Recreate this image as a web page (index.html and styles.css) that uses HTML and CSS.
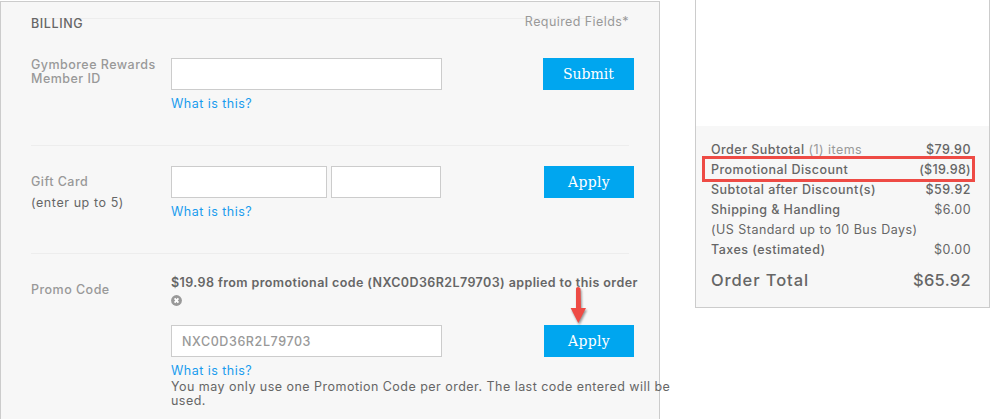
FILE: index.html
```html
<!DOCTYPE html>
<html lang="en">
<head>
    <meta charset="UTF-8">
    <meta name="viewport" content="width=device-width, initial-scale=1.0">
    <title>Checkout - Billing</title>
    <link rel="stylesheet" href="styles.css">
</head>
<body>
<div class="page">
    <main class="billing">
        <div class="billing-head">
            <h2>BILLING</h2>
            <span class="required">Required Fields*</span>
        </div>

        <section class="row rewards">
            <label for="rewards" class="label">Gymboree Rewards<br>Member ID</label>
            <div class="fields">
                <input type="text" id="rewards">
                <a class="help">What is this?</a>
            </div>
            <button class="submit">Submit</button>
        </section>

        <section class="row gift">
            <label for="card" class="label">
                <span>Gift Card</span>
                <small>(enter up to 5)</small>
            </label>
            <div class="fields">
                <div class="pair">
                    <input type="text" id="card">
                    <input type="text" id="pin">
                </div>
                <a class="help">What is this?</a>
            </div>
            <button>Apply</button>
        </section>

        <section class="row promo">
            <label for="promo" class="label">Promo Code</label>
            <div class="message">
                <strong>$19.98 from promotional code (NXC0D36R2L79703) applied to this order</strong>
                <svg class="remove" width="11" height="11" viewBox="0 0 11 11">
                    <circle cx="5.5" cy="5.5" r="5.4" fill="#999"/>
                    <path d="M3.6 3.3 L7.4 7.7 M7.4 3.3 L3.6 7.7" stroke="#fff" stroke-width="1.8"/>
                </svg>
            </div>
            <div class="fields">
                <input type="text" id="promo" value="NXC0D36R2L79703">
                <a class="help">What is this?</a>
                <p class="note">You may only use one Promotion Code per order. The last code entered will be<br>used.</p>
            </div>
            <div class="action">
                <button>Apply</button>
                <svg class="arrow" width="24" height="42" viewBox="0 0 24 42">
                    <path d="M10 3.5 Q10 2 12 2 Q14 2 14.5 3.5 L15 23 H20 L12.3 38 L4.6 23 H10 Z" fill="#ee4b45"/>
                </svg>
            </div>
        </section>
    </main>

    <aside class="summary">
        <dl class="totals">
            <div><dt>Order Subtotal <em>(1) items</em></dt><dd>$79.90</dd></div>
            <div class="discount"><dt>Promotional Discount</dt><dd>($19.98)</dd></div>
            <div><dt>Subtotal after Discount(s)</dt><dd>$59.92</dd></div>
            <div><dt>Shipping &amp; Handling</dt><dd class="light">$6.00</dd></div>
            <div><dt class="light">(US Standard up to 10 Bus Days)</dt></div>
            <div><dt>Taxes (estimated)</dt><dd class="light">$0.00</dd></div>
            <div class="total"><dt>Order Total</dt><dd>$65.92</dd></div>
        </dl>
    </aside>
</div>
</body>
</html>
```

FILE: styles.css
```css
* {
    box-sizing: border-box;
}

body {
    margin: 0;
    height: 419px;
    overflow: hidden;
    background: #fff;
    color: #666;
    font-family: Inter, "Open Sans", sans-serif;
    font-size: 12.5px;
    line-height: 14px;
    letter-spacing: 0.47px;
}

.page {
    display: flex;
    align-items: flex-start;
    gap: 35px;
}

/* billing form */
.billing {
    width: 660px;
    height: 418px;
    margin-top: 1px;
    padding: 16px 25px 0 30px;
    background: #f7f7f7;
    border: 1px solid #ccc;
    border-bottom: 0;
}

.billing-head {
    display: flex;
    justify-content: space-between;
    width: 598px;
    height: 40px;
    border-top: 1px solid #ededed;
    line-height: 10px;
}

h2 {
    margin: 0;
    font-size: 12.5px;
    font-weight: 500;
    letter-spacing: 0.6px;
}

.required {
    margin-top: -2px;
    color: #999;
    letter-spacing: 0.42px;
}

.row {
    position: relative;
    display: grid;
    grid-template-columns: 140px 1fr auto;
    align-items: start;
}

.rewards {
    height: 87px;
}

.gift,
.promo {
    height: 108px;
    padding-top: 21px;
}

/* rule stops short of the buttons */
.gift::before,
.promo::before {
    content: "";
    position: absolute;
    top: 0;
    left: 0;
    width: 598px;
    border-top: 1px solid #ededed;
}

.label {
    color: #999;
    font-weight: 500;
}

.gift .label {
    display: grid;
    gap: 7px;
    justify-items: start;
    padding-top: 9px;
}

small {
    color: #666;
    font-size: inherit;
    font-weight: 400;
    letter-spacing: 0.58px;
}

.fields {
    display: flex;
    flex-direction: column;
    align-items: flex-start;
}

.pair {
    display: flex;
    gap: 4px;
}

input {
    width: 271px;
    height: 32px;
    padding: 0 10px;
    border: 1px solid #ccc;
    background: #fff;
    color: #999;
    font: inherit;
    font-weight: 500;
    letter-spacing: 0.6px;
}

#card {
    width: 156px;
}

#pin {
    width: 110px;
}

.help {
    margin-top: 7px;
    color: #1a9cee;
}

button {
    display: block;
    width: 90px;
    height: 32px;
    padding: 0;
    border: 0;
    background: #00a6ef;
    color: #fff;
    font-family: "DejaVu Serif", serif;
    font-size: 14px;
    letter-spacing: 0.3px;
}

.submit {
    width: 91px;
    letter-spacing: 0;
}

.promo {
    grid-template-rows: 49px auto;
    padding-top: 23px;
}

.promo .label {
    padding-top: 7px;
}

.message {
    grid-column: 2 / 4;
    white-space: nowrap;
}

strong {
    font-weight: 600;
    letter-spacing: 0.41px;
}

.remove {
    display: block;
    margin-top: 5px;
}

.promo .fields {
    grid-column: 2;
}

/* second half of the line runs out over the panel edge */
.note {
    width: 510px;
    margin: 2px -250px 0 0;
    white-space: nowrap;
}

.action {
    position: relative;
}

.arrow {
    position: absolute;
    left: 22px;
    top: -40px;
    filter: drop-shadow(1px 2px 1px rgba(0, 0, 0, 0.4));
}

/* order summary */
.summary {
    width: 295px;
    height: 308px;
    padding-top: 126px;
    border: 1px solid #ccc;
    border-top: 0;
}

.totals {
    height: 181px;
    margin: 0;
    padding: 14px 18px 0 15px;
    background: #f7f7f7;
    font-weight: 500;
    line-height: 20px;
}

.totals > div {
    position: relative;
    display: flex;
    justify-content: space-between;
}

dd {
    margin: 0;
}

em {
    color: #999;
    font-style: normal;
    font-weight: 400;
}

.light {
    font-weight: 400;
}

.discount dd {
    letter-spacing: 0.3px;
}

.discount::after {
    content: "";
    position: absolute;
    inset: -4px -4px -2px -9px;
    border: 3px solid #ee4b45;
}

.total {
    padding-top: 10px;
    font-size: 16.5px;
}

.total dt {
    letter-spacing: 0.9px;
}

.total dd {
    letter-spacing: 0.3px;
}
```
